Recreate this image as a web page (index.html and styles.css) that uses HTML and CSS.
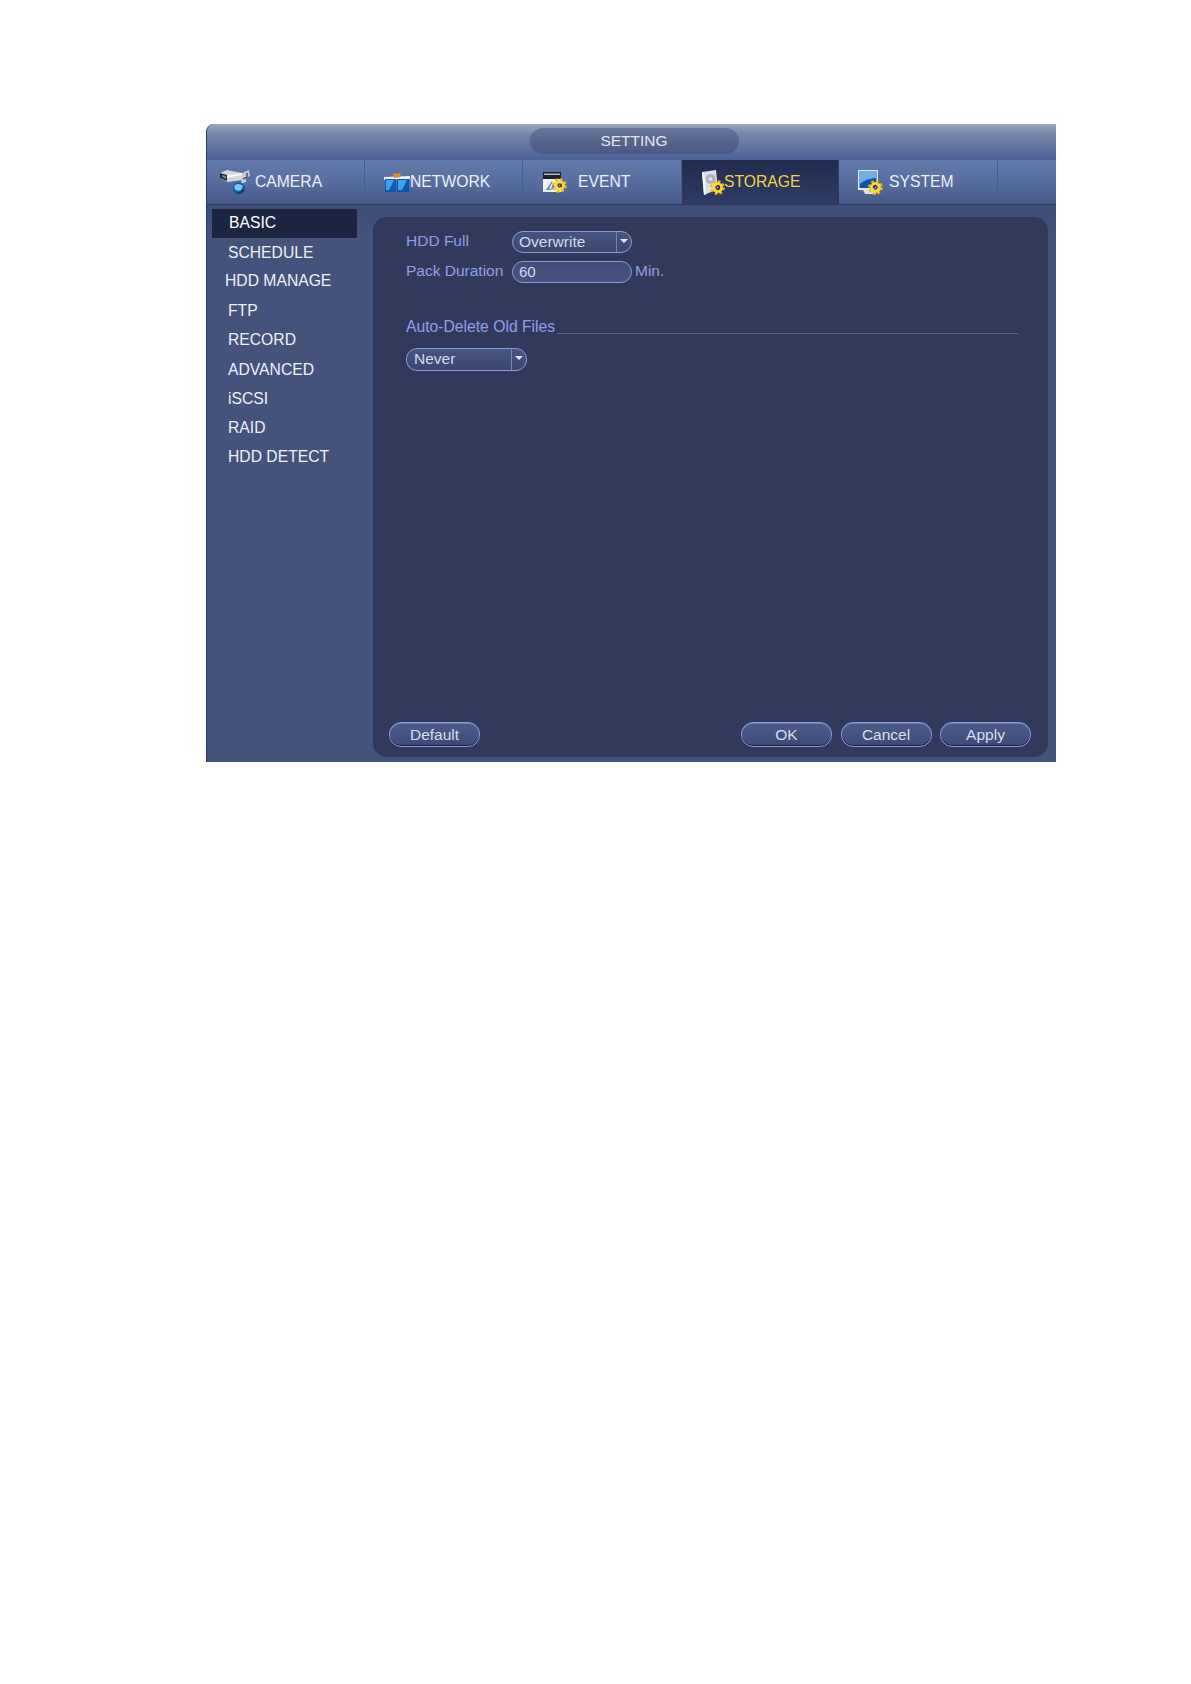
FILE: index.html
```html
<!DOCTYPE html>
<html lang="en">
<head>
    <meta charset="UTF-8">
    <title>Setting - Storage</title>
    <link rel="stylesheet" href="styles.css">
</head>
<body>
    <svg class="defs" width="0" height="0">
        <symbol id="gear" viewBox="0 0 14 14">
            <circle cx="7" cy="7" r="5.4" fill="none" stroke="#f0b414" stroke-width="3" stroke-dasharray="2.3 1.9"/>
            <circle cx="7" cy="7" r="3.8" fill="none" stroke="#ffd92e" stroke-width="2.6"/>
            <circle cx="7" cy="7" r="2" fill="#2e3040"/>
            <circle cx="7" cy="7" r="0.9" fill="#c9a227"/>
        </symbol>
    </svg>

    <div class="window">
        <div class="title-bar">
            <div class="title-pill">SETTING</div>
        </div>

        <div class="tabs">
            <div class="tab tab-camera">
                <svg class="icon" width="30" height="25" viewBox="0 0 30 25">
                    <path d="M0 3 L7 0 L22 3 L22 10 L8 12 L0 8 Z" fill="#d3d7df"/>
                    <path d="M0 3 L7 5 L7 11 L0 8 Z" fill="#23262e"/>
                    <path d="M2 5 L6 6 L6 9 L2 7 Z" fill="#7a808c"/>
                    <path d="M7 5 L22 3 L22 5 L7 8 Z" fill="#f6f7fa"/>
                    <path d="M22 3 L29 0 L30 6 L26 8 L26 12 L21 14 Z" fill="#c4c8d2"/>
                    <path d="M23 9 L27 7 L27 3" fill="none" stroke="#2f323a" stroke-width="1.2"/>
                    <circle cx="19" cy="18.5" r="6.2" fill="#0f5fa8"/>
                    <path d="M14.5 15.5 Q19 12.5 23 16 L21 20 Q17 22 14.5 19 Z" fill="#7cc4ee"/>
                    <path d="M17 23 Q21 23 24 20" fill="none" stroke="#1c2a4a" stroke-width="1.2"/>
                </svg>
                <span>CAMERA</span>
            </div>
            <div class="tab tab-network">
                <svg class="icon" width="26" height="19" viewBox="0 0 26 19">
                    <path d="M0 4 L26 3 L26 6 L0 7 Z" fill="#eef2f8"/>
                    <path d="M9 1 L16 0 L17 4 L10 5 Z" fill="#e08a26"/>
                    <rect x="1" y="6" width="11" height="13" fill="#0c5cb4"/>
                    <rect x="13" y="6" width="12" height="13" fill="#0a56ac"/>
                    <path d="M2 7 H10 L5 17 H2 Z" fill="#3fa2ee"/>
                    <path d="M14 7 H23 L18 17 H14 Z" fill="#3fa2ee"/>
                </svg>
                <span>NETWORK</span>
            </div>
            <div class="tab tab-event">
                <svg class="icon" width="24" height="21" viewBox="0 0 24 21">
                    <rect x="0" y="0" width="18" height="7" fill="#1e2128"/>
                    <rect x="1" y="1.5" width="16" height="1.5" fill="#b4bac6"/>
                    <rect x="0" y="7" width="18" height="13" fill="#eef1f7"/>
                    <path d="M3 18 L9 9 L14 16 L7 18 Z" fill="#5f82cc"/>
                    <path d="M7 17 L11 8" stroke="#fff" stroke-width="1.4"/>
                    <use href="#gear" x="9" y="6" width="15" height="15"/>
                </svg>
                <span>EVENT</span>
            </div>
            <div class="tab tab-storage active">
                <svg class="icon" width="23" height="25" viewBox="0 0 23 25">
                    <path d="M0 2 L14 0 L16 19 L2 25 Z" fill="#d9dde6"/>
                    <path d="M0 2 L2 2 L4 24 L2 25 Z" fill="#f8f9fc"/>
                    <circle cx="8.5" cy="9" r="5" fill="#aeb4c2"/>
                    <circle cx="8.5" cy="9" r="1.6" fill="#f0f2f7"/>
                    <use href="#gear" x="8" y="10" width="15" height="15"/>
                </svg>
                <span>STORAGE</span>
            </div>
            <div class="tab tab-system">
                <svg class="icon" width="25" height="25" viewBox="0 0 25 25">
                    <rect x="0" y="0" width="20" height="20" fill="#e6e9f0"/>
                    <rect x="1.5" y="1" width="17" height="17" fill="#0f54aa"/>
                    <path d="M1.5 1 H18.5 V8 Q9 8 1.5 14 Z" fill="#6fb0e4"/>
                    <path d="M5 20 H16 L18 24 H7 Z" fill="#dde0e8"/>
                    <use href="#gear" x="10" y="10" width="15" height="15"/>
                </svg>
                <span>SYSTEM</span>
            </div>
        </div>

        <div class="content">
            <ul class="side-menu">
                <li class="side-item active">BASIC</li>
                <li class="side-item">SCHEDULE</li>
                <li class="side-item side-item-manage">HDD MANAGE</li>
                <li class="side-item side-item-ftp">FTP</li>
                <li class="side-item">RECORD</li>
                <li class="side-item side-item-advanced">ADVANCED</li>
                <li class="side-item">iSCSI</li>
                <li class="side-item">RAID</li>
                <li class="side-item">HDD DETECT</li>
            </ul>

            <div class="panel">
                <div class="form-row">
                    <label class="form-label">HDD Full</label>
                    <div class="select">
                        <span class="select-text">Overwrite</span>
                        <span class="select-arrow"></span>
                    </div>
                </div>
                <div class="form-row form-row-second">
                    <label class="form-label">Pack Duration</label>
                    <div class="text-input">60</div>
                    <span class="unit">Min.</span>
                </div>

                <div class="group-title">
                    <span>Auto-Delete Old Files</span>
                    <div class="group-line"></div>
                </div>
                <div class="select select-never">
                    <span class="select-text">Never</span>
                    <span class="select-arrow"></span>
                </div>

                <div class="panel-footer">
                    <button class="btn">Default</button>
                    <div class="footer-right">
                        <button class="btn">OK</button>
                        <button class="btn">Cancel</button>
                        <button class="btn">Apply</button>
                    </div>
                </div>
            </div>
        </div>
    </div>
</body>
</html>
```

FILE: styles.css
```css
* {
    box-sizing: border-box;
    margin: 0;
    padding: 0;
}

body {
    background-color: white;
    font-family: "Liberation Sans", Arial, sans-serif;
    font-size: 15.5px;
}

.defs {
    position: absolute;
}

.window {
    width: 850px;
    height: 638px;
    margin: 124px 0 0 206px;
    display: flex;
    flex-direction: column;
    background-color: #44537b;
    border-left: 1px solid #2b3860;
    border-top-left-radius: 8px;
    overflow: hidden;
}

.title-bar {
    height: 36px;
    display: flex;
    justify-content: center;
    padding: 4px 0 0 5px;
    background: linear-gradient(#9aa7bd 0%, #7485a8 30%, #5f74a2 65%, #4b6197 100%);
}

.title-pill {
    width: 209px;
    height: 26px;
    line-height: 25px;
    text-align: center;
    color: #e2e6f0;
    border-radius: 13px;
    background: linear-gradient(#66759a, #57658c 50%, #4a5a85);
}

.tabs {
    height: 45px;
    display: flex;
    background: linear-gradient(#627aab, #566c9c 55%, #465a88);
    border-bottom: 1px solid #2c3a60;
}

.tab {
    width: 158px;
    display: flex;
    align-items: center;
    font-size: 15.7px;
    color: #eef1f8;
    border-right: 1px solid #4a5d8c;
}

.tab.active {
    color: #f6d24a;
    background: linear-gradient(#1f2a4c, #2f3d66);
    border-right: 1px solid #2c3a60;
}

.tab-camera {
    padding-left: 13px;
}

.tab-camera .icon {
    margin-right: 5px;
}

.tab-network {
    padding-left: 19px;
}

.tab-event {
    width: 159px;
    padding-left: 20px;
}

.tab-event .icon {
    margin-right: 11px;
}

.tab-storage {
    width: 157px;
    padding-left: 20px;
}

.tab-storage .icon {
    margin-right: -1px;
}

.tab-system {
    width: 159px;
    padding-left: 19px;
}

.tab-system .icon {
    margin-right: 6px;
}

.content {
    flex: 1;
    display: flex;
    min-height: 0;
    background: linear-gradient(#3f4e76, #44537b 30px);
}

.side-menu {
    width: 166px;
    padding: 4px 0 0 5px;
    list-style: none;
    flex-shrink: 0;
}

.side-item {
    width: 145px;
    height: 29px;
    line-height: 29px;
    padding-left: 16px;
    font-size: 15.7px;
    color: #eef1f8;
}

.side-item.active {
    padding-left: 17px;
    line-height: 27px;
    background-color: #1c2540;
    color: #fff;
}

.side-item-manage {
    margin-top: -1px;
    padding-left: 13px;
}

.side-item-ftp {
    margin-top: 1px;
}

.side-item-advanced {
    margin-top: 1px;
}

.panel {
    flex: 1;
    margin: 12px 8px 5px 0;
    padding: 14px 30px 10px 33px;
    display: flex;
    flex-direction: column;
    background-color: #323a5c;
    border-radius: 14px;
}

.form-row {
    display: flex;
    align-items: center;
    height: 22px;
}

.form-row-second {
    margin-top: 8px;
}

.form-label {
    width: 106px;
    color: #8e9fe6;
    position: relative;
    top: -1px;
}

.select {
    width: 120px;
    height: 22px;
    display: flex;
    border: 1.5px solid #8a9bd2;
    border-radius: 11px;
    background: linear-gradient(#46557f, #3a4670);
    color: #d4daee;
    line-height: 19px;
    overflow: hidden;
}

.select-text {
    flex: 1;
    padding-left: 6px;
    font-size: 15.5px;
}

.select-never .select-text {
    padding-left: 7px;
}

.select-arrow {
    width: 15px;
    border-left: 1px solid #7283b8;
    position: relative;
}

.select-arrow::after {
    content: "";
    position: absolute;
    left: 3px;
    top: 7px;
    border-left: 4px solid transparent;
    border-right: 4px solid transparent;
    border-top: 4px solid #e8ecf8;
}

.text-input {
    width: 120px;
    height: 22px;
    padding-left: 6px;
    line-height: 20px;
    font-size: 15px;
    border: 1.5px solid #8a9bd2;
    border-radius: 11px;
    background: linear-gradient(#3f4c76, #46557f);
    color: #d4daee;
}

.unit {
    margin-left: 3px;
    color: #8e9fe6;
    position: relative;
    top: -1px;
}

.group-title {
    height: 22px;
    margin-top: 33px;
    display: flex;
    align-items: center;
    font-size: 15.7px;
    color: #8e9fe6;
}

.group-line {
    flex: 1;
    height: 1px;
    margin: 12px 0 0 2px;
    background-color: #56628c;
}

.select-never {
    height: 23px;
    margin-top: 10px;
    width: 121px;
}

.panel-footer {
    margin: auto -13px 0 -17px;
    display: flex;
    justify-content: space-between;
}

.footer-right {
    display: flex;
    gap: 8.5px;
}

.btn {
    width: 91px;
    height: 25px;
    font-family: inherit;
    font-size: 15.5px;
    color: #d8def0;
    border: 1.5px solid #8a9bd2;
    border-radius: 12px;
    background: linear-gradient(#4c5c88, #3c4a76);
    box-shadow: inset 0 -1px 0 #1b2448, inset 0 1px 0 #6c7cb0;
}
```
